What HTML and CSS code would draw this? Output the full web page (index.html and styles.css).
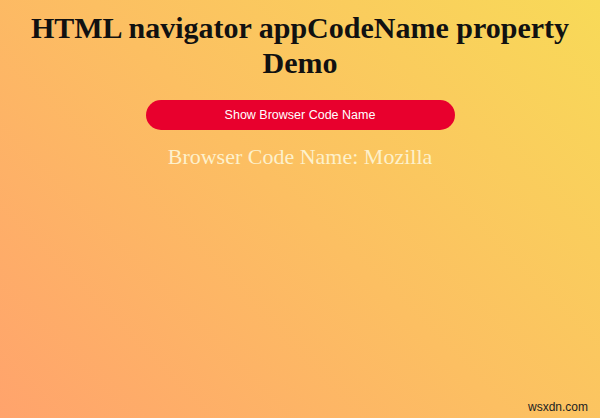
FILE: index.html
```html
<!DOCTYPE html>
<html>
<head>
<meta charset="utf-8">
<link rel="stylesheet" href="styles.css">
</head>
<body>
<main class="page">
  <h1 class="title">HTML navigator appCodeName property Demo</h1>
  <button class="btn">Show Browser Code Name</button>
  <p class="result">Browser Code Name: Mozilla</p>
</main>
<footer class="watermark">wsxdn.com</footer>
</body>
</html>
```
FILE: styles.css
```css
html, body {
  margin: 0;
  padding: 0;
  height: 100%;
}
body {
  background: linear-gradient(45deg, #ffa36c 0%, #fcbf62 50%, #f8da58 100%);
  font-family: "Liberation Serif", "Times New Roman", serif;
  display: flex;
  flex-direction: column;
  overflow: hidden;
}
.page {
  flex: 1;
  display: flex;
  flex-direction: column;
  align-items: center;
  padding: 10px 8px 0;
}
.title {
  margin: 0;
  font-size: 30px;
  line-height: 35px;
  font-weight: bold;
  color: #111;
  text-align: center;
}
.btn {
  margin-top: 20px;
  width: 309px;
  height: 30px;
  border: none;
  border-radius: 15px;
  background: #e8002d;
  color: #fff;
  font-family: "Liberation Sans", Arial, sans-serif;
  font-size: 12.5px;
  cursor: pointer;
}
.result {
  margin: 14px 0 0;
  font-size: 22px;
  color: #fdf1cc;
}
.watermark {
  align-self: flex-end;
  margin: 0 12px 4px 0;
  font-family: "Liberation Sans", Arial, sans-serif;
  font-size: 12px;
  color: #222;
}
```
